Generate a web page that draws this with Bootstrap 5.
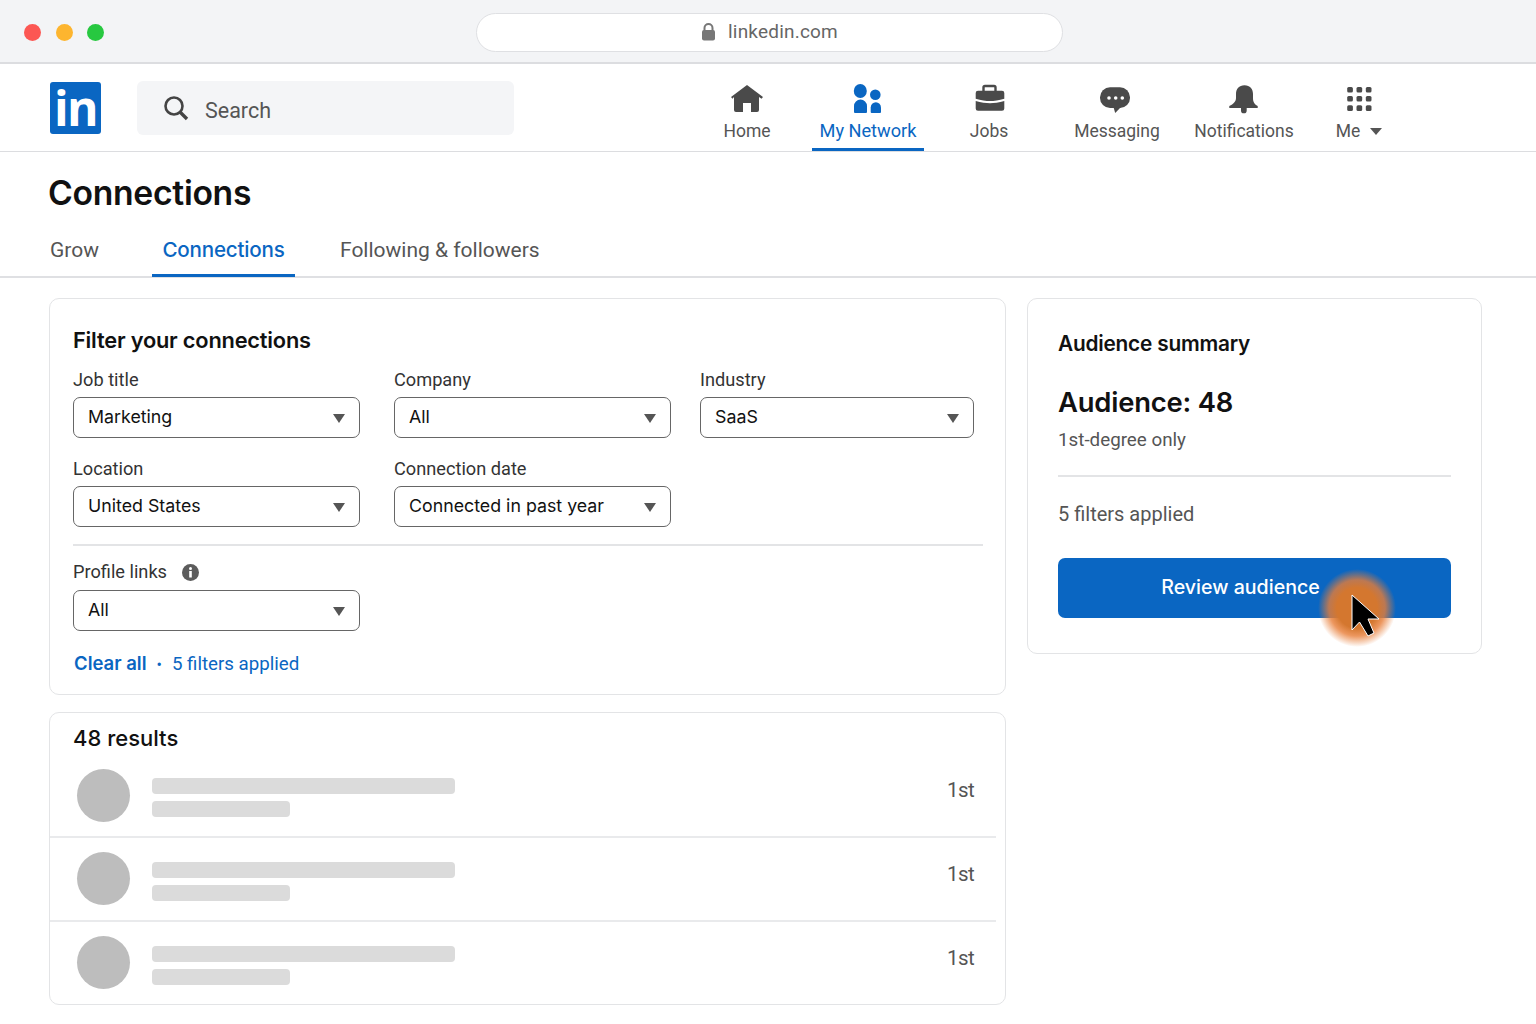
<!DOCTYPE html>
<html>
<head>
  <meta charset="UTF-8">
  <title>Connections</title>
  <link href="https://cdn.jsdelivr.net/npm/bootstrap@5.3.2/dist/css/bootstrap.min.css" rel="stylesheet">
  <style>
    body { font-family: "Inter", "Roboto", sans-serif; color: #111; background: #fff; overflow: hidden; height: 1024px; }
    .chrome-bar { height: 64px; background: #f3f4f6; border-bottom: 2px solid #dcdde0; padding: 2px 0 0 24px; }
    .dot { width: 17px; height: 17px; border-radius: 50%; }
    .dot-red { background: #fc5753; }
    .dot-amber { background: #fdb52f; }
    .dot-green { background: #27c840; }
    .dots { gap: 14.5px; }
    .url-pill { width: 587px; height: 39px; margin-left: 372px; background: #fff; border: 1px solid #dfe0e3; border-radius: 20px; color: #666; font-family: "Roboto", sans-serif; font-size: 19px; gap: 12px; letter-spacing: .2px; }
    .top-nav { height: 88px; border-bottom: 1px solid #dcdde0; padding-left: 50px; }
    .brand-box { width: 51px; height: 52px; background: #0a66c2; border-radius: 3px; color: #fff; font-family: "Open Sans", sans-serif; font-weight: 700; font-size: 48px; line-height: 52px; letter-spacing: -1.5px; }
    .search-box { width: 377px; height: 54px; margin-left: 36px; background: #f4f5f7; border-radius: 6px; padding-left: 26px; gap: 16px; color: #555; font-family: "Roboto", sans-serif; font-size: 21.5px; }
    .search-box span { padding-top: 7px; }
    .nav-list { margin-left: 176px; height: 87px; }
    .nav-cell { height: 87px; color: #555; font-family: "Roboto", sans-serif; font-size: 17.5px; padding-top: 19px; text-decoration: none; }
    .nav-cell svg { height: 32px; display: block; margin-bottom: 4px; overflow: visible; }
    .nav-cell span { line-height: 24px; }
    .nav-cell.active-cell { color: #0a66c2; border-bottom: 3px solid #0a66c2; margin-left: 8px; font-size: 18.2px; }
    .w-home { width: 114px; } .w-net { width: 112px; } .w-jobs { width: 130px; }
    .w-msg { width: 126px; } .w-notif { width: 128px; } .w-me { width: 102px; }
    .me-caret { display: inline-block; width: 0; height: 0; border-left: 6px solid transparent; border-right: 6px solid transparent; border-top: 7px solid #555; margin-left: 10px; vertical-align: 2px; }
    .page-title { font-size: 33.7px; font-weight: 600; line-height: 42px; margin: 20px 0 0 48px; letter-spacing: -.3px; }
    .tab-strip { height: 64px; border-bottom: 2px solid #dfe0e3; padding-left: 50px; font-family: "Roboto", sans-serif; font-size: 21px; }
    .tab-link { color: #555; text-decoration: none; line-height: 24px; padding-top: 24px; }
    .tab-link.tab-on { color: #0a66c2; font-weight: 500; width: 143px; margin: 0 45px 0 53px; text-align: center; border-bottom: 3px solid #0a66c2; height: 63px; font-family: "Inter", sans-serif; font-size: 20.6px; letter-spacing: -.2px; }
    .main-wrap { padding: 20px 0 0 49px; gap: 21px; }
    .left-col { width: 957px; }
    .right-col { width: 455px; }
    .panel { border: 1px solid #e3e4e6; border-radius: 10px; background: #fff; }
    .filter-panel { height: 397px; padding: 24px 22px 0 23px; }
    .panel-title { font-size: 21.8px; font-weight: 600; line-height: 34px; margin: 0; letter-spacing: -.2px; }
    .filter-head { margin-bottom: 11px; }
    .field-label { font-family: "Roboto", sans-serif; font-size: 18.2px; line-height: 24px; color: #333; margin: 0 0 5px; }
    .form-select.pick { height: 41px; border: 1px solid #666; border-radius: 7px; font-family: "Inter", sans-serif; font-size: 17.8px; color: #111; padding: 0 14px; background-image: none; box-shadow: none; }
    .pick-wrap { position: relative; }
    .pick-wrap::after { content: ""; position: absolute; right: 15px; top: 17px; border-left: 6.5px solid transparent; border-right: 6.5px solid transparent; border-top: 9px solid #555; }
    .f-a { width: 287px; } .f-b { width: 277px; margin-left: 34px; } .f-c { width: 274px; margin-left: 29px; }
    .filter-row { height: 89px; }
    .filter-rule { border-top: 2px solid #e3e4e6; margin: 17px 0 14px 0; }
    .label-spaced { gap: 15px; margin-bottom: 6px; }
    .filter-links { font-family: "Roboto", sans-serif; color: #0a66c2; font-size: 18.7px; margin: 20px 0 0 1px; line-height: 24px; }
    .filter-links b { font-family: "Inter", sans-serif; font-weight: 600; font-size: 18.5px; }
    .filter-links i { font-style: normal; margin: 0 10px; font-size: 16px; }
    .results-panel { height: 293px; margin-top: 17px; }
    .results-title { font-size: 22px; font-weight: 500; line-height: 28px; padding: 11px 0 0 23px; height: 41px; }
    .person-row { height: 84px; margin-right: 9px; padding: 15px 22px 0 27px; border-bottom: 2px solid #e9eaec; }
    .person-row:last-child { border-bottom: 0; }
    .face { width: 53px; height: 53px; border-radius: 50%; background: #bdbdbd; flex: none; }
    .person-row + .person-row .face { margin-top: -1px; }
    .bars { margin: 9px 0 0 22px; gap: 7px; width: 303px; }
    .bar-long { height: 16px; background: #dbdbdb; border-radius: 4px; }
    .bar-short { height: 16px; width: 138px; background: #dbdbdb; border-radius: 4px; }
    .degree { font-family: "Roboto", sans-serif; font-size: 20.5px; letter-spacing: -.6px; color: #555; line-height: 42px; margin-left: auto; }
    .summary-panel { height: 356px; padding: 28px 30px 0 30px; }
    .summary-panel .panel-title { font-size: 20.8px; }
    .aud-num { font-size: 27.4px; font-weight: 600; line-height: 40px; margin: 21px 0 0; letter-spacing: -.2px; }
    .aud-sub { font-family: "Roboto", sans-serif; font-size: 18.8px; color: #555; line-height: 26px; margin: 5px 0 0; }
    .summary-rule { border-top: 2px solid #e3e4e6; margin: 22px 0 0; }
    .aud-filters { font-family: "Roboto", sans-serif; font-size: 20px; color: #555; line-height: 28px; margin: 23px 0 0; }
    .btn.review { position: relative; display: block; width: 100%; height: 60px; margin-top: 30px; background: #0a66c2; border: 0; border-radius: 7px; color: #fff; font-family: "Inter", sans-serif; font-weight: 500; font-size: 19.6px; padding: 0 28px 0 0; }
    .glow { position: absolute; left: 260px; top: 11px; width: 78px; height: 78px; border-radius: 50%; background: radial-gradient(circle closest-side, #d4772f 0 52%, rgba(232,125,55,.8) 72%, rgba(245,150,90,0) 100%); }
    .pointer { position: absolute; left: 292px; top: 36px; width: 32px; height: 46px; }
  </style>
</head>
<body>
  <div class="chrome-bar d-flex align-items-center">
    <div class="dots d-flex">
      <div class="dot dot-red"></div>
      <div class="dot dot-amber"></div>
      <div class="dot dot-green"></div>
    </div>
    <div class="url-pill d-flex align-items-center justify-content-center">
      <svg width="15" height="18" viewBox="0 0 15 18"><path d="M3.5 8V5a4 4 0 0 1 8 0v3" fill="none" stroke="#777" stroke-width="2"/><rect x="1" y="7" width="13" height="10.500" rx="2" fill="#777"/></svg>
      <span>linkedin.com</span>
    </div>
  </div>

  <nav class="top-nav d-flex align-items-center">
    <div class="brand-box d-flex justify-content-center align-items-center">in</div>
    <div class="search-box d-flex align-items-center">
      <svg width="26" height="26" viewBox="0 0 26 26"><circle cx="11" cy="11" r="8.500" fill="none" stroke="#444" stroke-width="2.600"/><path d="M17 17l7 7" stroke="#444" stroke-width="3.400"/></svg>
      <span>Search</span>
    </div>
    <div class="nav-list d-flex">
      <a class="nav-cell w-home d-flex flex-column align-items-center">
        <svg viewBox="0 0 32 32" width="32"><path d="M16 2 32 14 30.500 15.800 28 14V27a2 2 0 0 1-2 2H20V20H12V29H5a2 2 0 0 1-2-2V14L1.500 15.800 0 14z" fill="#4a4a4a"/></svg>
        <span>Home</span>
      </a>
      <a class="nav-cell active-cell w-net d-flex flex-column align-items-center">
        <svg viewBox="0 0 32 32" width="32"><ellipse cx="8.300" cy="8" rx="6.500" ry="7" fill="#0a66c2"/><path d="M2 29a1 1 0 0 0 1 1H14a1 1 0 0 0 1-1V23a6.500 6.500 0 0 0-13 0z" fill="#0a66c2"/><circle cx="23.300" cy="11.700" r="5.300" fill="#0a66c2"/><path d="M18.700 29a1 1 0 0 0 1 1H28a1 1 0 0 0 1-1V24.500a5.100 5.100 0 0 0-10.300 0z" fill="#0a66c2"/></svg>
        <span>My Network</span>
      </a>
      <a class="nav-cell w-jobs d-flex flex-column align-items-center">
        <svg viewBox="0 0 32 32" width="32"><path d="M10.500 8V4.500a1.500 1.500 0 0 1 1.500-1.500h9a1.500 1.500 0 0 1 1.500 1.500V8" fill="none" stroke="#4a4a4a" stroke-width="2.400"/><path d="M5 7.700H29a2.300 2.300 0 0 1 2.300 2.300V15.700C26 17.500 21 18 17 18S8 17.500 2.700 15.700V10A2.300 2.300 0 0 1 5 7.700z" fill="#4a4a4a"/><path d="M2.700 18C8 19.700 13 20.200 17 20.200S26 19.700 31.300 18V25.500a2.300 2.300 0 0 1-2.300 2.300H5a2.300 2.300 0 0 1-2.300-2.300z" fill="#4a4a4a"/></svg>
        <span>Jobs</span>
      </a>
      <a class="nav-cell w-msg d-flex flex-column align-items-center">
        <svg viewBox="0 0 32 32" width="32"><rect x="-1" y="4.300" width="30" height="20.700" rx="10" fill="#4a4a4a"/><path d="M12.500 24 14.200 30 20 24z" fill="#4a4a4a"/><circle cx="8" cy="15" r="1.800" fill="#fff"/><circle cx="14.700" cy="15" r="1.800" fill="#fff"/><circle cx="21.300" cy="15" r="1.800" fill="#fff"/></svg>
        <span>Messaging</span>
      </a>
      <a class="nav-cell w-notif d-flex flex-column align-items-center">
        <svg viewBox="0 0 32 32" width="32"><path d="M16.500 2.300C11 2.300 8 6 8 11V15C8 18.500 5.500 21 1.300 23V25H29.700V23C26 21 25 18.500 25 15V11C25 6 22 2.300 16.500 2.300z" fill="#4a4a4a"/><path d="M13 25H18.700V27.500a2.850 2.850 0 0 1-5.700 0z" fill="#4a4a4a"/></svg>
        <span>Notifications</span>
      </a>
      <a class="nav-cell w-me d-flex flex-column align-items-center">
        <svg viewBox="0 0 32 32" width="32"><g fill="#4a4a4a"><rect x="4.200" y="3.900" width="5.700" height="5.700" rx="1.500"/><rect x="13.500" y="3.900" width="5.700" height="5.700" rx="1.500"/><rect x="22.800" y="3.900" width="5.700" height="5.700" rx="1.500"/><rect x="4.200" y="12.900" width="5.700" height="5.700" rx="1.500"/><rect x="13.500" y="12.900" width="5.700" height="5.700" rx="1.500"/><rect x="22.800" y="12.900" width="5.700" height="5.700" rx="1.500"/><rect x="4.200" y="22.200" width="5.700" height="5.700" rx="1.500"/><rect x="13.500" y="22.200" width="5.700" height="5.700" rx="1.500"/><rect x="22.800" y="22.200" width="5.700" height="5.700" rx="1.500"/></g></svg>
        <span>Me<em class="me-caret"></em></span>
      </a>
    </div>
  </nav>

  <h1 class="page-title">Connections</h1>
  <div class="tab-strip d-flex">
    <a class="tab-link">Grow</a>
    <a class="tab-link tab-on">Connections</a>
    <a class="tab-link">Following &amp; followers</a>
  </div>

  <div class="main-wrap d-flex align-items-start">
    <div class="left-col">
      <div class="panel filter-panel">
        <h2 class="panel-title filter-head">Filter your connections</h2>
        <div class="filter-row d-flex">
          <div class="f-a">
            <div class="field-label">Job title</div>
            <div class="pick-wrap"><select class="form-select pick"><option>Marketing</option></select></div>
          </div>
          <div class="f-b">
            <div class="field-label">Company</div>
            <div class="pick-wrap"><select class="form-select pick"><option>All</option></select></div>
          </div>
          <div class="f-c">
            <div class="field-label">Industry</div>
            <div class="pick-wrap"><select class="form-select pick"><option>SaaS</option></select></div>
          </div>
        </div>
        <div class="d-flex">
          <div class="f-a">
            <div class="field-label">Location</div>
            <div class="pick-wrap"><select class="form-select pick"><option>United States</option></select></div>
          </div>
          <div class="f-b">
            <div class="field-label">Connection date</div>
            <div class="pick-wrap"><select class="form-select pick"><option>Connected in past year</option></select></div>
          </div>
        </div>
        <div class="filter-rule"></div>
        <div class="f-a">
          <div class="field-label label-spaced d-flex align-items-center">Profile links
            <svg width="17" height="17" viewBox="0 0 17 17"><circle cx="8.500" cy="8.500" r="8.500" fill="#5c5c5c"/><rect x="7.200" y="7" width="2.600" height="6.500" fill="#fff"/><circle cx="8.500" cy="4.600" r="1.500" fill="#fff"/></svg>
          </div>
          <div class="pick-wrap"><select class="form-select pick"><option>All</option></select></div>
        </div>
        <div class="filter-links"><b>Clear all</b><i>•</i>5 filters applied</div>
      </div>

      <div class="panel results-panel">
        <div class="results-title">48 results</div>
        <div class="person-row d-flex">
          <div class="face"></div>
          <div class="bars d-flex flex-column"><div class="bar-long"></div><div class="bar-short"></div></div>
          <div class="degree">1st</div>
        </div>
        <div class="person-row d-flex">
          <div class="face"></div>
          <div class="bars d-flex flex-column"><div class="bar-long"></div><div class="bar-short"></div></div>
          <div class="degree">1st</div>
        </div>
        <div class="person-row d-flex">
          <div class="face"></div>
          <div class="bars d-flex flex-column"><div class="bar-long"></div><div class="bar-short"></div></div>
          <div class="degree">1st</div>
        </div>
      </div>
    </div>

    <div class="right-col">
      <div class="panel summary-panel">
        <h2 class="panel-title">Audience summary</h2>
        <p class="aud-num">Audience: 48</p>
        <p class="aud-sub">1st-degree only</p>
        <div class="summary-rule"></div>
        <p class="aud-filters">5 filters applied</p>
        <button class="btn review" type="button">Review audience
          <span class="glow"></span>
          <svg class="pointer" viewBox="0 0 32 46"><path d="M2 1V36L9.500 28 18 42 24 39 18 25H29z" fill="#000" stroke="#fff" stroke-width="1"/></svg>
        </button>
      </div>
    </div>
  </div>
  <script src="https://cdn.jsdelivr.net/npm/bootstrap@5.3.2/dist/js/bootstrap.bundle.min.js"></script>
</body>
</html>
